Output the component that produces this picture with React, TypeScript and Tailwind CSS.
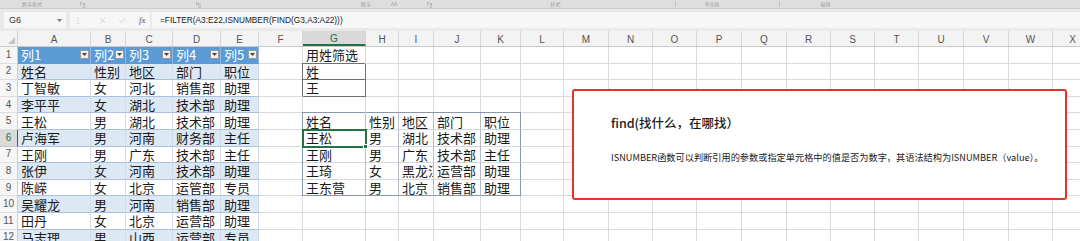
import { Check, X } from "lucide-react";

const FONT = "font-['Noto_Sans_CJK_SC',sans-serif]";

const COLS = ["A", "B", "C", "D", "E", "F", "G", "H", "I", "J", "K", "L", "M", "N", "O", "P", "Q", "R", "S", "T", "U", "V", "W", "X"];
const WIDTHS = [
  "w-[73px]", "w-[35px]", "w-[47px]", "w-[48px]", "w-[38px]", "w-[44px]", "w-[63px]", "w-[33px]",
  "w-[35px]", "w-[47px]", "w-[40px]", "w-[43px]", "w-[45px]", "w-[44px]", "w-[44px]", "w-[45px]",
  "w-[45px]", "w-[44px]", "w-[44px]", "w-[44px]", "w-[45px]", "w-[45px]", "w-[44px]", "w-[40px]",
];

// 左边的源表 A1:E12
const source = [
  ["列1", "列2", "列3", "列4", "列5"],
  ["姓名", "性别", "地区", "部门", "职位"],
  ["丁智敏", "女", "河北", "销售部", "助理"],
  ["李平平", "女", "湖北", "技术部", "助理"],
  ["王松", "男", "湖北", "技术部", "助理"],
  ["卢海军", "男", "河南", "财务部", "主任"],
  ["王刚", "男", "广东", "技术部", "主任"],
  ["张伊", "女", "河南", "技术部", "助理"],
  ["陈嵘", "女", "北京", "运管部", "专员"],
  ["吴耀龙", "男", "河南", "销售部", "助理"],
  ["田丹", "女", "北京", "运营部", "助理"],
  ["马志理", "男", "山西", "运营部", "专员"],
];

// G 列开始的筛选结果
const result: Record<number, string[]> = {
  1: ["用姓筛选"],
  2: ["姓"],
  3: ["王"],
  5: ["姓名", "性别", "地区", "部门", "职位"],
  6: ["王松", "男", "湖北", "技术部", "助理"],
  7: ["王刚", "男", "广东", "技术部", "主任"],
  8: ["王琦", "女", "黑龙江", "运营部", "助理"],
  9: ["王东营", "男", "北京", "销售部", "助理"],
};

function cellText(r: number, c: number) {
  if (c < 5) return source[r - 1][c];
  if (c >= 6 && c <= 10 && result[r]) return result[r][c - 6] ?? "";
  return "";
}

function cellClass(r: number, c: number) {
  if (c < 5) {
    if (r === 1) return "bg-[#5b9bd5] text-white border-r-[#93bae4] border-b-[#5b9bd5]";
    return `${r % 2 === 0 ? "bg-[#dde8f5]" : "bg-white"} text-[#1a1a1a] border-r-[#d3dbe6] border-b-[#a9c1df]`;
  }
  if (c === 6 && (r === 2 || r === 3)) {
    return "bg-white text-[#1a1a1a] border-r-[#707070] border-b-[#707070] shadow-[-1px_-1px_0_0_#707070]";
  }
  if (r >= 5 && r <= 9 && c >= 6 && c <= 10) {
    const right = c === 10 ? "border-r-[#8a96aa]" : "border-r-[#b6bdc9]";
    const bottom = r === 9 ? "border-b-[#8a96aa]" : "border-b-[#d3d7de]";
    let shadow = "";
    if (r === 5 && c === 6) shadow = "shadow-[-1px_-1px_0_0_#8a96aa]";
    else if (r === 5) shadow = "shadow-[0_-1px_0_0_#8a96aa]";
    else if (c === 6) shadow = "shadow-[-1px_0_0_0_#8a96aa]";
    return `bg-white text-[#1a1a1a] ${right} ${bottom} ${shadow}`;
  }
  return "bg-white text-[#1a1a1a] border-r-[#dadada] border-b-[#dadada]";
}

function FilterButton() {
  return (
    <span className="mr-[1px] ml-auto flex h-[9px] w-[9px] shrink-0 items-center justify-center border border-[#9a9a9a] bg-[#f1f1f1]">
      <svg width="5" height="3" viewBox="0 0 5 3">
        <path d="M0 0h5L2.5 3z" fill="#444" />
      </svg>
    </span>
  );
}

function Row({ r }: { r: number }) {
  const selectedRow = r === 6;
  return (
    <div className="flex h-[16.6px]">
      <div
        className={`flex w-[18px] shrink-0 items-center justify-center border-r border-b text-[10px] leading-[12px] font-['Liberation_Sans',sans-serif] ${
          selectedRow
            ? "border-r-[#217346] border-b-[#c8c8c8] bg-[#dadada] text-[#217346]"
            : "border-r-[#cfcfcf] border-b-[#dedede] bg-[#f6f6f6] text-[#555]"
        }`}
      >
        {r}
      </div>
      {COLS.map((_, c) => {
        const selected = r === 6 && c === 6;
        return (
          <div
            key={c}
            className={`${WIDTHS[c]} flex shrink-0 items-center overflow-hidden whitespace-nowrap border-r border-b pl-[3px] text-[13px] ${cellClass(r, c)} ${
              selected ? "relative z-10 outline-2 outline-[#217346] -outline-offset-1 overflow-visible" : ""
            }`}
          >
            <span className="block h-[15px] leading-[15px]">{cellText(r, c)}</span>
            {r === 1 && c < 5 && <FilterButton />}
            {selected && (
              <span className="absolute -right-[3px] -bottom-[3px] h-[5px] w-[5px] border border-white bg-[#217346]" />
            )}
          </div>
        );
      })}
    </div>
  );
}

export default function App() {
  return (
    <div className={`relative h-[241px] w-[1080px] overflow-hidden bg-white ${FONT}`}>
      {/* 功能区底部 */}
      <div className="flex h-[9px] items-center border-b border-[#cfcfcf] bg-[#dedede] text-[5px] leading-[6px] text-[#a0a0a0] blur-[0.4px]">
        <span className="ml-[22px]">数字格式</span>
        <span className="ml-[38px]">Fg</span>
        <span className="ml-[110px]">Fg</span>
        <span className="ml-[160px]">数字</span>
        <span className="ml-[20px]">AA</span>
        <span className="ml-[30px]">Fg</span>
        <span className="ml-[118px]">样式</span>
        <span className="ml-[115px] border-l border-[#c4c4c4] pl-[28px]">单元格</span>
        <span className="ml-[60px] border-l border-[#c4c4c4] pl-[40px]">编辑</span>
      </div>

      {/* 编辑栏 */}
      <div className="flex h-[22px] items-center bg-[#e9e9e9] pt-[2px] pb-[2px]">
        <div className="ml-[4px] flex h-[16px] w-[62px] items-center justify-between bg-[#f7f7f7] pr-[4px] pl-[5px] font-['Liberation_Sans',sans-serif] text-[9px] leading-[12px] text-[#333]">
          <span>G6</span>
          <svg width="5" height="3" viewBox="0 0 5 3">
            <path d="M0 0h5L2.5 3z" fill="#777" />
          </svg>
        </div>
        <div className="ml-[4px] flex h-[16px] w-[80px] items-center bg-[#f7f7f7]">
          <span className="ml-[4px] text-[8px] leading-none text-[#b5b5b5]">⋮</span>
          <X size={9} strokeWidth={1.5} className="ml-[16px] text-[#b8b8b8]" />
          <Check size={9} strokeWidth={1.5} className="ml-[11px] text-[#b8b8b8]" />
          <span className="ml-[12px] font-['Liberation_Serif',serif] text-[9px] leading-[12px] italic text-[#555]">fx</span>
        </div>
        <div className="ml-[2px] flex h-[16px] flex-1 items-center bg-[#f7f7f7] pl-[8px] font-['Liberation_Sans',sans-serif] text-[8.3px] leading-[12px] text-[#222]">
          =FILTER(A3:E22,ISNUMBER(FIND(G3,A3:A22)))
        </div>
      </div>

      {/* 列标题 */}
      <div className="flex h-[16px] border-b border-[#c9c9c9] bg-[#f3f3f3] font-['Liberation_Sans',sans-serif] text-[10px] leading-[12px] text-[#555]">
        <div className="relative w-[18px] shrink-0 border-r border-[#d0d0d0]">
          <svg className="absolute right-[2px] bottom-[2px]" width="7" height="7" viewBox="0 0 7 7">
            <path d="M7 0v7H0z" fill="#c4c4c4" />
          </svg>
        </div>
        {COLS.map((col, c) => (
          <div
            key={col}
            className={`${WIDTHS[c]} flex shrink-0 items-center justify-center border-r border-[#d6d6d6] pt-[2px] ${
              c === 6 ? "border-b-2 border-b-[#217346] bg-[#d9d9d9] text-[#217346]" : ""
            }`}
          >
            {col}
          </div>
        ))}
      </div>

      {/* 行 */}
      {Array.from({ length: 12 }, (_, i) => (
        <Row key={i} r={i + 1} />
      ))}

      {/* 说明文本框 */}
      <div className="absolute top-[89px] left-[572px] z-20 h-[111px] w-[495px] rounded-[3px] border-2 border-[#e2352a] bg-white pt-[23px] pl-[37px] text-[#1a1a1a]">
        <p className="text-[12.5px] leading-[18px] font-medium">find(找什么，在哪找）</p>
        <p className="mt-[19px] text-[9.2px] leading-[12px]">
          ISNUMBER函数可以判断引用的参数或指定单元格中的值是否为数字，其语法结构为ISNUMBER（value）。
        </p>
      </div>
    </div>
  );
}
